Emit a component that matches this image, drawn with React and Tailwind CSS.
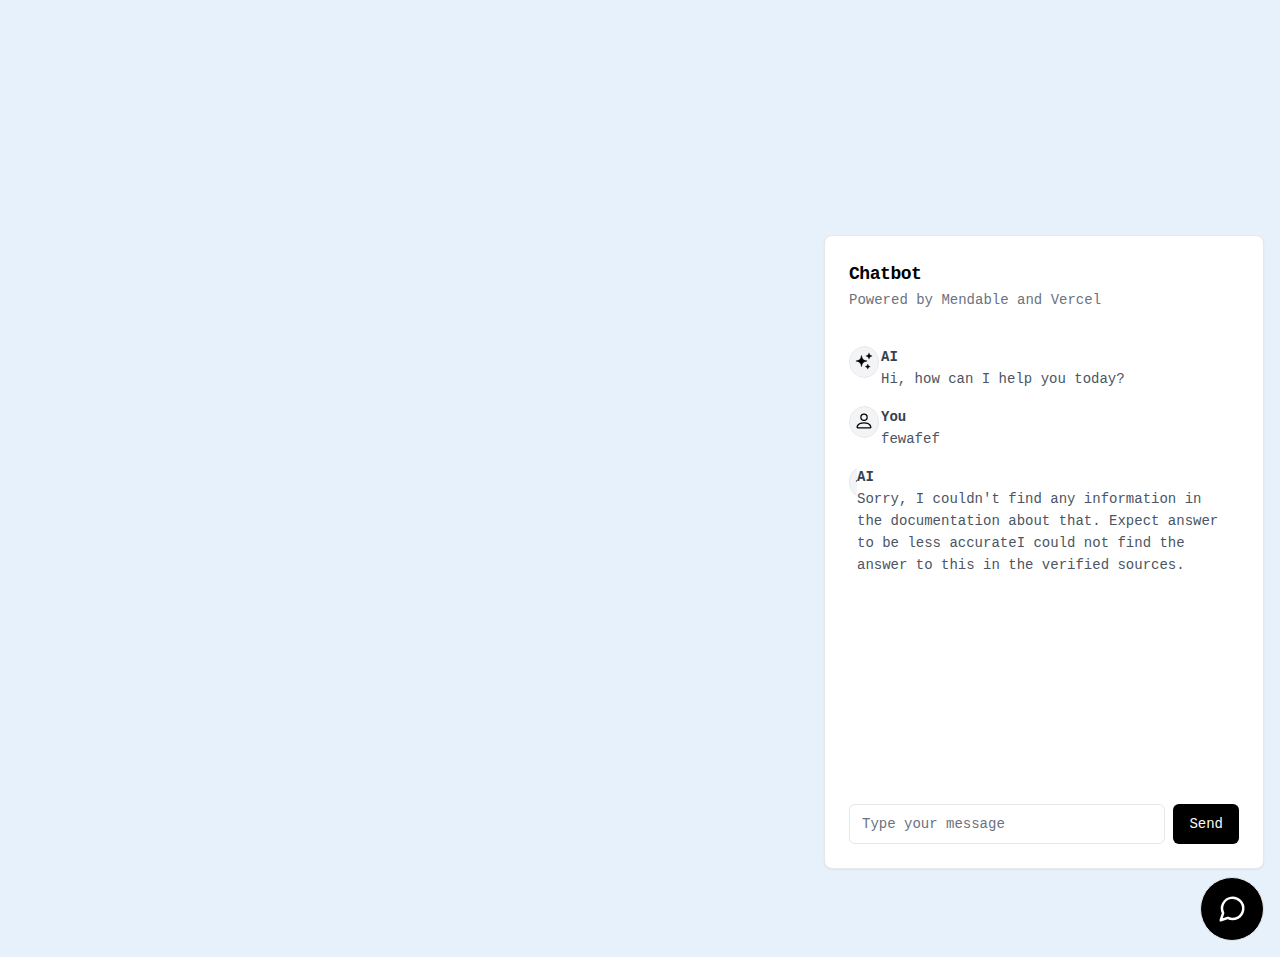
import React from "react";

function SparklesIcon() {
  return (
    <svg
      width="20"
      height="20"
      viewBox="0 0 24 24"
      fill="black"
      stroke="black"
      strokeWidth="0.5"
      aria-hidden="true"
    >
      <path d="M9.813 15.904L9 18.75l-.813-2.846a4.5 4.5 0 00-3.09-3.09L2.25 12l2.846-.813a4.5 4.5 0 003.09-3.09L9 5.25l.813 2.846a4.5 4.5 0 003.09 3.09L15.75 12l-2.846.813a4.5 4.5 0 00-3.09 3.09zM18.259 8.715L18 9.75l-.259-1.035a3.375 3.375 0 00-2.455-2.456L14.25 6l1.036-.259a3.375 3.375 0 002.455-2.456L18 2.25l.259 1.035a3.375 3.375 0 002.456 2.456L21.75 6l-1.035.259a3.375 3.375 0 00-2.456 2.456zM16.894 20.567L16.5 21.75l-.394-1.183a2.25 2.25 0 00-1.423-1.423L13.5 18.75l1.183-.394a2.25 2.25 0 001.423-1.423l.394-1.183.394 1.183a2.25 2.25 0 001.423 1.423l1.183.394-1.183.394a2.25 2.25 0 00-1.423 1.423z" />
    </svg>
  );
}

function PersonIcon() {
  return (
    <svg width="20" height="20" viewBox="0 0 16 16" fill="black" aria-hidden="true">
      <path d="M8 8a3 3 0 1 0 0-6 3 3 0 0 0 0 6Zm2-3a2 2 0 1 1-4 0 2 2 0 0 1 4 0Zm4 8c0 1-1 1-1 1H3s-1 0-1-1 1-4 6-4 6 3 6 4Zm-1-.004c-.001-.246-.154-.986-.832-1.664C11.516 10.68 10.289 10 8 10c-2.29 0-3.516.68-4.168 1.332-.678.678-.83 1.418-.832 1.664h10Z" />
    </svg>
  );
}

const messages = [
  { author: "AI", text: "Hi, how can I help you today?" },
  { author: "You", text: "fewafef" },
  {
    author: "AI",
    text: "Sorry, I couldn't find any information in the documentation about that. Expect answer to be less accurateI could not find the answer to this in the verified sources.",
    narrow: true,
  },
];

function Message({ author, text, narrow }) {
  return (
    <div className="my-4 flex text-sm text-[#4b5563]">
      <span
        className={
          narrow
            ? "flex h-8 w-2 shrink-0 overflow-hidden rounded-full"
            : "flex h-8 w-8 shrink-0 overflow-hidden rounded-full"
        }
      >
        <span className="h-8 shrink-0 rounded-full border border-[#e5e7eb] bg-[#f3f4f6] p-1">
          {author === "AI" ? <SparklesIcon /> : <PersonIcon />}
        </span>
      </span>
      <p className="min-w-0 flex-1 leading-[22px]">
        <span className="block font-bold text-[#374151]">{author}</span>
        {text}
      </p>
    </div>
  );
}

export default function App() {
  return (
    <div className="flex min-h-screen flex-col items-end justify-end bg-[#e6f1fb] p-4 font-['Liberation_Mono',monospace]">
      <section className="mb-2 w-full max-w-[440px] rounded-lg border border-[#e5e7eb] bg-white p-6 shadow-xs">
        <header className="flex flex-col gap-1.5 pb-6">
          <h2 className="text-lg leading-7 font-semibold tracking-tight text-black">Chatbot</h2>
          <p className="text-sm leading-3 text-[#6b7280]">Powered by Mendable and Vercel</p>
        </header>
        <div className="flow-root min-h-[474px] pr-4">
          {messages.map((message, index) => (
            <Message key={index} {...message} />
          ))}
        </div>
        <form className="flex items-center gap-2" onSubmit={(event) => event.preventDefault()}>
          <input
            type="text"
            aria-label="Type your message"
            placeholder="Type your message"
            className="h-10 min-w-0 flex-1 rounded-md border border-[#e5e7eb] px-3 text-sm text-[#030712] placeholder:text-[#6b7280]"
          />
          <button
            type="submit"
            className="h-10 rounded-md bg-black px-4 text-sm font-medium text-[#f9fafb]"
          >
            Send
          </button>
        </form>
      </section>
      <button
        type="button"
        aria-label="Toggle chat"
        className="flex h-16 w-16 items-center justify-center rounded-full border border-[#e5e7eb] bg-black text-white"
      >
        <svg
          width="30"
          height="40"
          viewBox="0 0 24 24"
          fill="none"
          stroke="currentColor"
          strokeWidth="2"
          strokeLinecap="round"
          strokeLinejoin="round"
          aria-hidden="true"
        >
          <path d="m3 21 1.9-5.7a8.5 8.5 0 1 1 3.8 3.8z" />
        </svg>
      </button>
    </div>
  );
}
